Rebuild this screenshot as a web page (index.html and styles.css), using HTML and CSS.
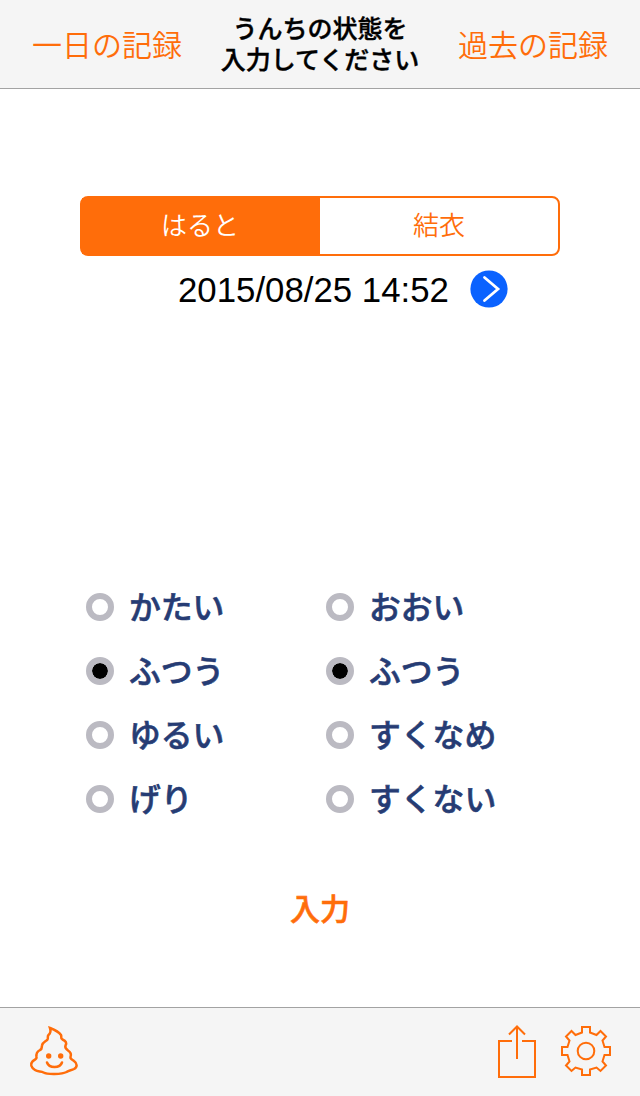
FILE: index.html
```html
<!DOCTYPE html>
<html lang="ja">
<head>
    <meta charset="UTF-8">
    <meta name="viewport" content="width=device-width, initial-scale=1.0">
    <title>うんちの記録</title>
    <link rel="stylesheet" href="styles.css">
</head>
<body>

    <header class="navbar">
        <a class="nav-link">一日の記録</a>
        <h1 class="nav-title">うんちの状態を<br>入力してください</h1>
        <a class="nav-link">過去の記録</a>
    </header>

    <main class="content">
        <div class="segmented">
            <button class="segment selected">はると</button>
            <button class="segment">結衣</button>
        </div>

        <div class="date-row">
            <span class="date">2015/08/25 14:52</span>
            <button class="next-button" aria-label="次へ">
                <svg width="38" height="38" viewBox="0 0 38 38">
                    <circle cx="19" cy="19" r="18.6" fill="#0a62ff"/>
                    <path d="M14.5 7.5 L28 19 L14.5 30.5" fill="none" stroke="#fff" stroke-width="2.8" stroke-linecap="round"/>
                </svg>
            </button>
        </div>

        <div class="options">
            <div class="option-group">
                <div class="option"><span class="radio"></span><span class="label">かたい</span></div>
                <div class="option"><span class="radio checked"></span><span class="label">ふつう</span></div>
                <div class="option"><span class="radio"></span><span class="label">ゆるい</span></div>
                <div class="option"><span class="radio"></span><span class="label">げり</span></div>
            </div>
            <div class="option-group">
                <div class="option"><span class="radio"></span><span class="label">おおい</span></div>
                <div class="option"><span class="radio checked"></span><span class="label">ふつう</span></div>
                <div class="option"><span class="radio"></span><span class="label">すくなめ</span></div>
                <div class="option"><span class="radio"></span><span class="label">すくない</span></div>
            </div>
        </div>

        <button class="submit">入力</button>
    </main>

    <footer class="toolbar">
        <svg class="icon poop" width="52" height="54" viewBox="0 0 52 54">
            <path d="M22 4 C26 5.5 31 8 33 11 C34 13 32 14.5 34.5 15.5 C38 17 39 19 37.5 21.5 C36.5 24 38 25 40 26.5 C43 28.5 43.5 30.5 42.5 33 C42 35 44 35.5 46 37 C49.5 39.5 49.5 43 46 45 C43 46.5 41 46 38.5 48 C34 50.5 19 50.5 15.5 48.5 C13 47 10 48 7 46 C3 43.5 2 40 4.5 37.5 C6 35.5 9 35.5 8.5 33 C8 29.5 9 27.5 12 26 C14.5 25 13.5 23.5 14 21.5 C14.5 18 18 17.5 19.5 15.5 C20.5 14 19 12.5 20.5 11 C23 9 23 7 22 4 Z"/>
            <circle class="eye" cx="20.7" cy="32" r="2.7"/>
            <circle class="eye" cx="32.7" cy="32" r="2.7"/>
            <path d="M19 38.5 C21 44.5 32 44.5 34 38.5"/>
        </svg>
        <div class="toolbar-right">
            <svg class="icon" width="40" height="54" viewBox="0 0 40 54">
                <path d="M15 17 H2 V53 H38 V17 H25 M20 35 V2.5 M12 10.5 L20 2.5 L28 10.5"/>
            </svg>
            <svg class="icon" width="52" height="52" viewBox="-26 -26 52 52">
                <path d="M-4 -24 H4 V-18.5 L10.5 -16 L14.5 -20 L20 -14.5 L16.5 -10.5 L18.5 -4 H24 V4 H18.5 L16.5 10.5 L20 14.5 L14.5 20 L10.5 16.5 L4 18.5 V24 H-4 V18.5 L-10.5 16.5 L-14.5 20 L-20 14.5 L-16.5 10.5 L-18.5 4 H-24 V-4 H-18.5 L-16.5 -10.5 L-20 -14.5 L-14.5 -20 L-10.5 -16 L-4 -18.5 Z"/>
                <circle r="8.3"/>
            </svg>
        </div>
    </footer>

</body>
</html>
```
FILE: styles.css
```css
* {
    box-sizing: border-box;
}

body {
    margin: 0;
    height: 1096px;
    display: flex;
    flex-direction: column;
    background: #fff;
    font-family: "Liberation Sans", "Noto Sans CJK JP", sans-serif;
}

button {
    border: none;
    background: none;
    padding: 0;
    font-family: inherit;
}

.navbar {
    height: 89px;
    display: flex;
    justify-content: space-between;
    align-items: center;
    padding: 0 32px;
    background: #f5f5f5;
    border-bottom: 1px solid #a3a3a3;
}

.nav-link {
    padding-bottom: 2px;
    font-size: 30px;
    font-weight: 350;
    color: #ff6d0a;
}

.nav-title {
    margin: 0;
    padding-top: 2px;
    font-size: 25px;
    font-weight: 500;
    -webkit-text-stroke: 0.4px #000;
    line-height: 31px;
    text-align: center;
    color: #000;
}

.content {
    flex: 1;
    display: flex;
    flex-direction: column;
    align-items: center;
    padding-top: 107px;
}

.segmented {
    width: 480px;
    height: 60px;
    display: flex;
    border: 2px solid #ff6d0a;
    border-radius: 8px;
}

.segment {
    width: 238px;
    padding-bottom: 5px;
    font-size: 26px;
    font-weight: 350;
    color: #ff6d0a;
}

.segment.selected {
    padding-right: 2px;
    background: #ff6d0a;
    color: #fff;
}

.date-row {
    width: 100%;
    height: 38px;
    display: flex;
    align-items: center;
    margin-top: 14px;
    padding-left: 178px;
}

.date {
    width: 292px;
    padding-top: 1px;
    font-size: 34.8px;
    color: #000;
}

.next-button {
    height: 38px;
}

.options {
    width: 480px;
    display: flex;
    margin-top: 267px;
}

.option-group {
    width: 240px;
    padding-left: 6px;
}

.option {
    height: 64px;
    display: flex;
    align-items: center;
    gap: 15px;
}

.label {
    padding-bottom: 5px;
    font-size: 31.8px;
    font-weight: 500;
    -webkit-text-stroke: 0.6px #263c74;
    color: #263c74;
}

.radio {
    width: 28px;
    height: 28px;
    border: 6px solid #bbbac2;
    border-radius: 50%;
    background: #fff;
}

.radio.checked {
    background: #000;
    background-clip: padding-box;
}

.submit {
    margin-top: 54px;
    font-size: 30px;
    font-weight: 500;
    -webkit-text-stroke: 0.6px #ff6d0a;
    color: #ff6d0a;
}

.toolbar {
    height: 89px;
    display: flex;
    justify-content: space-between;
    align-items: center;
    padding: 0 28px 2px;
    background: #f5f5f5;
    border-top: 1px solid #a3a3a3;
}

.toolbar-right {
    display: flex;
    align-items: center;
    gap: 23px;
}

.icon {
    fill: none;
    stroke: #ff6d0a;
    stroke-width: 2;
}

.icon.poop {
    stroke-width: 2.5;
    stroke-linecap: round;
}

.icon .eye {
    fill: #ff6d0a;
    stroke: none;
}
```
